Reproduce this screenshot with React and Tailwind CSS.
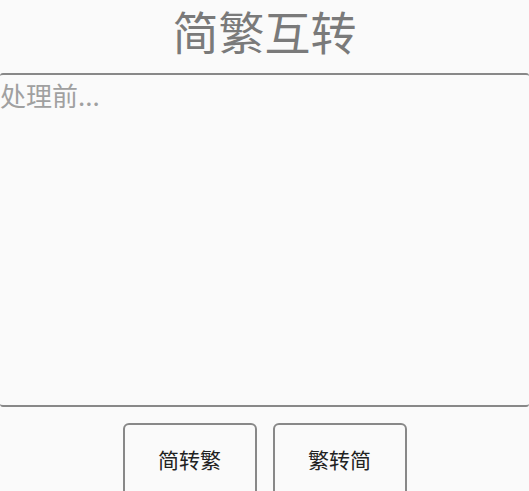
import { useState } from 'react'

const font = { fontFamily: '"Noto Sans CJK SC", "Noto Sans", sans-serif' }

export default function App() {
  const [text, setText] = useState('')

  return (
    <div className="min-h-screen bg-[#fafafa]" style={font}>
      <h1 className="text-center text-[46px] leading-[60px] text-[#7a7a7a] font-normal mb-[13px]">简繁互转</h1>
      <textarea
        value={text}
        onChange={e => setText(e.target.value)}
        placeholder="处理前..."
        className="block w-full h-[334px] resize-none bg-[#fafafa] border-y-2 border-[#888] rounded-[3px] p-0 text-[26px] leading-[39px] text-[#333] placeholder:text-[#a0a0a0] outline-none"
      />
      <div className="flex justify-center gap-4 mt-[16px]">
        <button className="w-[134px] h-[74px] border-2 border-[#888] rounded-md bg-[#fafafa] text-[21px] text-[#222]">简转繁</button>
        <button className="w-[134px] h-[74px] border-2 border-[#888] rounded-md bg-[#fafafa] text-[21px] text-[#222]">繁转简</button>
      </div>
    </div>
  )
}
